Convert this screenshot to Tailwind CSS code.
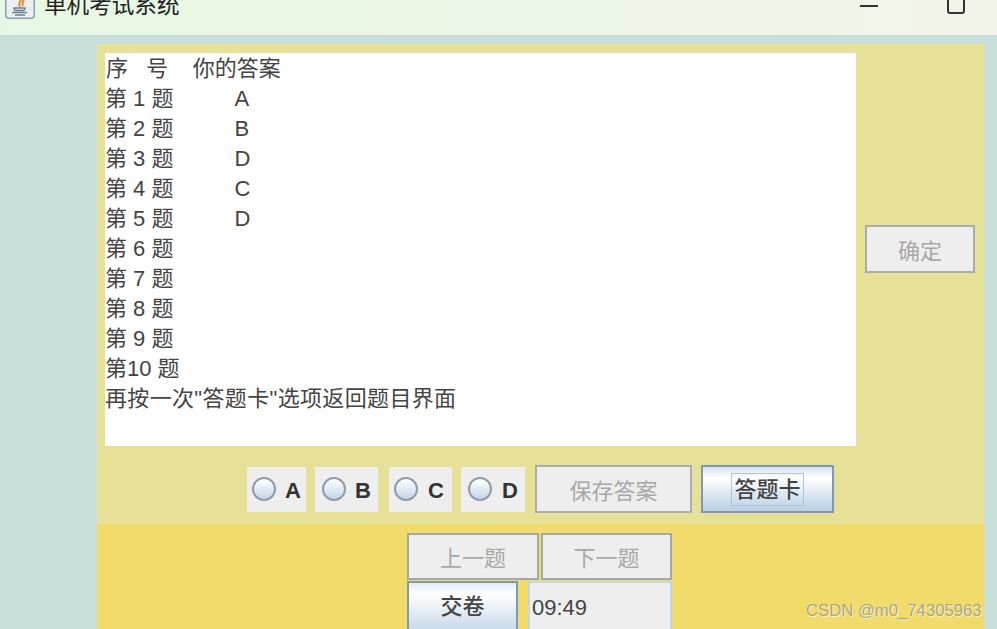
<!DOCTYPE html>
<html lang="zh">
<head>
  <meta charset="UTF-8" />
  <title>单机考试系统</title>
  <script src="https://cdn.jsdelivr.net/npm/@tailwindcss/browser@4"></script>
</head>
<body class="relative h-[629px] overflow-hidden bg-[#c8dedb] font-['Liberation_Sans','Noto_Sans_CJK_SC',sans-serif] text-[22px] text-[#444]">
  <!-- title bar, cut off by the top of the screenshot -->
  <div class="flex h-[35px] items-start overflow-hidden bg-gradient-to-r from-[#e6f8e3] to-[#f3f4e9]">
    <svg class="ml-[5px] mt-[-9px] shrink-0" width="30" height="28" viewBox="0 0 30 28">
      <rect x="0.75" y="0.75" width="28.5" height="26.5" rx="3" fill="#eeeeee" stroke="#8da0b4" stroke-width="1.5" />
      <path d="M15 7c3 3-3 4 0 9M18 8c2 2-2 3 0 7" fill="none" stroke="#e08a3c" stroke-width="2" />
      <path d="M9 17h11c0 1.2-1 2.5-2 2.5h-7c-1 0-2-1.300-2-2.500zM7 21.500h15M10 24h10" fill="none" stroke="#6b8296" stroke-width="1.500" />
    </svg>
    <span class="ml-[9px] mt-[-9px] text-[22.6px] leading-[30px] text-[#222]">单机考试系统</span>
    <div class="ml-auto mr-[69px] mt-[5px] h-[2px] w-[18px] bg-[#333]"></div>
    <div class="mr-[32px] mt-[-8px] h-[22px] w-[18px] rounded-[3px] border-2 border-[#333]"></div>
  </div>

  <main class="ml-[97px] mr-[13px] mt-[9px]">
    <section class="flex h-[480px] bg-[#e7e097]">
      <div class="ml-[8px] mt-[9px] w-[751px] shrink-0">
        <pre class="h-[393px] bg-white pt-px font-['Liberation_Sans','Noto_Sans_CJK_SC',sans-serif] text-[22px] leading-[30px] text-[#444]"><span class="ml-px">序   号    你的答案</span>
第 1 题          A
第 2 题          B
第 3 题          D
第 4 题          C
第 5 题          D
第 6 题
第 7 题
第 8 题
第 9 题
第10 题
<span class="tracking-[0.34px]">再按一次"答题卡"选项返回题目界面</span></pre>
        <div class="ml-[142px] mt-[19px] flex items-center">
          <label class="mr-[9px] flex h-[45px] w-[59px] items-center bg-[#eeeeee] pl-[5px] font-bold text-[#333]">
            <span class="h-[24px] w-[24px] rounded-full border-2 border-[#8e9cab] bg-gradient-to-b from-white to-[#c4d6e8]"></span>
            <span class="ml-[9px] mt-[3px]">A</span>
          </label>
          <label class="mr-[11px] flex h-[45px] w-[63px] items-center bg-[#eeeeee] pl-[7px] font-bold text-[#333]">
            <span class="h-[24px] w-[24px] rounded-full border-2 border-[#8e9cab] bg-gradient-to-b from-white to-[#c4d6e8]"></span>
            <span class="ml-[9px] mt-[3px]">B</span>
          </label>
          <label class="mr-[9px] flex h-[45px] w-[63px] items-center bg-[#eeeeee] pl-[5px] font-bold text-[#333]">
            <span class="h-[24px] w-[24px] rounded-full border-2 border-[#8e9cab] bg-gradient-to-b from-white to-[#c4d6e8]"></span>
            <span class="ml-[10px] mt-[3px]">C</span>
          </label>
          <label class="mr-[10px] flex h-[45px] w-[64px] items-center bg-[#eeeeee] pl-[7px] font-bold text-[#333]">
            <span class="h-[24px] w-[24px] rounded-full border-2 border-[#8e9cab] bg-gradient-to-b from-white to-[#c4d6e8]"></span>
            <span class="ml-[10px] mt-[3px]">D</span>
          </label>
          <button class="h-[48px] w-[157px] border-2 border-[#adadad] bg-[#eeeeee] pt-[4px] text-[#a8a8a8]">保存答案</button>
          <button class="ml-[9px] flex h-[48px] w-[133px] items-center justify-center border-2 border-[#8198b3] bg-linear-[180deg,#d5e3f1_0%,#ffffff_25%,#b9cfe5_100%] text-[#444]">
            <span class="flex h-[33px] w-[73px] items-center justify-center border border-[#b3c3d3] pt-px font-medium">答题卡</span>
          </button>
        </div>
      </div>
      <div class="ml-[9px] mt-[181px]">
        <button class="h-[48px] w-[110px] border-2 border-[#adadad] bg-[#eeeeee] pt-[4px] text-[#a8a8a8]">确定</button>
      </div>
    </section>

    <section class="h-[105px] overflow-hidden bg-[#f1dc6b] pl-[310px] pt-[9px]">
      <div class="flex w-[265px] gap-[2px]">
        <button class="h-[47px] w-[132px] border-2 border-[#a6a6a6] bg-[#eeeeee] pt-[3px] text-[#a8a8a8]">上一题</button>
        <button class="h-[47px] w-[131px] border-2 border-[#a6a6a6] bg-[#eeeeee] pt-[3px] text-[#a8a8a8]">下一题</button>
      </div>
      <div class="mt-px flex w-[265px]">
        <button class="h-[60px] w-[111px] border-2 border-[#8198b3] bg-linear-[180deg,#e3ecf5_0%,#ffffff_20%,#b9cfe5_100%] pb-[10px] font-medium text-[#444]">交卷</button>
        <div class="ml-[10px] h-[60px] w-[144px] border-2 border-[#c3d6e8] bg-[#eeeeee] pl-[2px] pt-[8px]">09:49</div>
      </div>
    </section>
  </main>

  <span class="absolute left-[806px] top-[601px] text-[16.7px] leading-[20px] text-[#aaa68c] [text-shadow:1px_1px_0_#f8f2c8]">CSDN @m0_74305963</span>
</body>
</html>
